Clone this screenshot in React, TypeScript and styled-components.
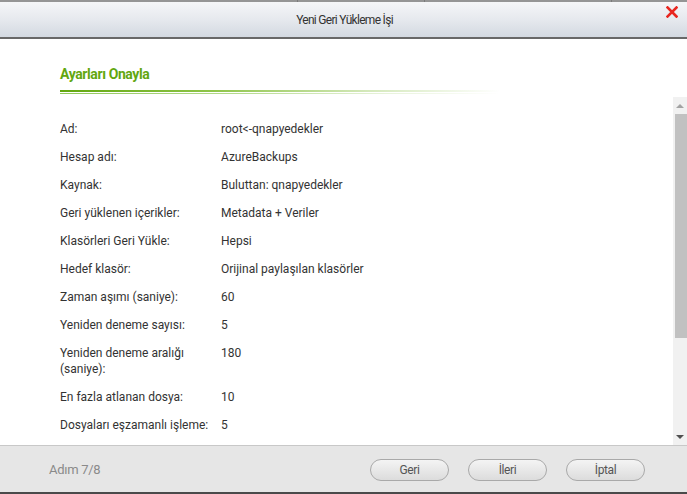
import React from 'react';
import styled, { createGlobalStyle } from 'styled-components';

const GlobalStyle = createGlobalStyle`
  html, body {
    margin: 0;
    padding: 0;
    background: #ffffff;
  }
  body {
    font-family: Roboto, "Liberation Sans", Arial, sans-serif;
    font-size: 12px;
    color: #333333;
  }
`;

const Dialog = styled.div`
  width: 687px;
  height: 494px;
  display: flex;
  flex-direction: column;
  overflow: hidden;
`;

const Backdrop = styled.div`
  height: 2px;
  display: flex;
  background: #959595;
`;

const BackdropCell = styled.div<{ $w: number }>`
  width: ${p => p.$w}px;
  border-right: 1px solid #7a7a7a;
`;

const TitleBar = styled.div`
  height: 35px;
  flex-shrink: 0;
  display: flex;
  align-items: center;
  justify-content: center;
  position: relative;
  background: linear-gradient(to bottom, #f5f6f8 0%, #e6e9ee 50%, #d3d9e1 100%);
  border-bottom: 2px solid #686868;
`;

const Title = styled.span`
  font-size: 12px;
  letter-spacing: -0.7px;
  color: #333333;
  padding-left: 2px;
`;

const CloseButton = styled.button`
  position: absolute;
  right: 9px;
  top: 4px;
  width: 12px;
  height: 12px;
  padding: 0;
  border: none;
  background: none;
  cursor: pointer;
  display: flex;
`;

const Body = styled.div`
  flex: 1;
  display: flex;
  flex-direction: column;
  background: #ffffff;
  min-height: 0;
`;

const HeadingBlock = styled.div`
  padding: 27px 0 0 60px;
`;

const Heading = styled.h2`
  margin: 0;
  font-size: 14px;
  line-height: 16px;
  font-weight: 700;
  letter-spacing: -0.4px;
  color: #62a70f;
`;

const Underline = styled.div`
  margin-top: 8px;
  width: 440px;
  height: 2px;
  background: linear-gradient(to right, #62a70f 0%, #8fc54a 35%, rgba(170, 210, 120, 0.5) 70%, rgba(255, 255, 255, 0) 100%);
`;

const UnderlineThin = styled.div`
  margin-top: 1px;
  width: 440px;
  height: 1px;
  background: linear-gradient(to right, #92c85a 0%, #b5da8c 40%, rgba(210, 232, 185, 0.5) 75%, rgba(255, 255, 255, 0) 100%);
`;

const ScrollArea = styled.div`
  margin-top: 3px;
  flex: 1;
  display: flex;
  min-height: 0;
`;

const ScrollContent = styled.div`
  flex: 1;
  overflow: hidden;
  padding: 18px 0 0 60px;
`;

const InfoGrid = styled.div`
  display: grid;
  grid-template-columns: 161px 1fr;
`;

const Label = styled.div`
  padding: 6px 8px 6px 0;
  line-height: 16px;
  color: #333333;
`;

const Value = styled.div`
  padding: 6px 0;
  line-height: 16px;
  color: #333333;
`;

const ScrollTrack = styled.div`
  width: 14px;
  background: #f1f1f1;
  display: flex;
  flex-direction: column;
  align-items: flex-end;
`;

const ArrowBox = styled.div`
  width: 14px;
  height: 17px;
  display: flex;
  align-items: center;
  justify-content: center;
`;

const Arrow = styled.div<{ $down?: boolean }>`
  width: 0;
  height: 0;
  border-left: 4px solid transparent;
  border-right: 4px solid transparent;
  ${p => p.$down ? 'border-top: 4px solid #505050;' : 'border-bottom: 4px solid #a3a3a3;'}
`;

const Thumb = styled.div`
  width: 12px;
  height: 224px;
  background: #c1c1c1;
`;

const TrackSpacer = styled.div`
  flex: 1;
`;

const Footer = styled.div`
  height: 46px;
  flex-shrink: 0;
  display: flex;
  align-items: center;
  background: #e6e6e6;
  border-top: 1px solid #c8c8c8;
  border-bottom: 2px solid #4a4a4a;
  padding: 0 42px 0 49px;
`;

const StepText = styled.span`
  font-size: 13px;
  letter-spacing: -0.3px;
  color: #8a8a8a;
  flex: 1;
`;

const ButtonRow = styled.div`
  display: flex;
  gap: 19px;
  padding-top: 2px;
`;

const PillButton = styled.button`
  width: 79px;
  height: 22px;
  border-radius: 11px;
  border: 1px solid #a9a9a9;
  background: linear-gradient(to bottom, #f4f4f4 0%, #e8e8e8 50%, #dcdcdc 100%);
  font-family: Roboto, "Liberation Sans", Arial, sans-serif;
  font-size: 12px;
  letter-spacing: -0.4px;
  color: #555555;
  padding: 0;
  cursor: pointer;
`;

const rows: { label: string; value: string }[] = [
  { label: 'Ad:', value: 'root<-qnapyedekler' },
  { label: 'Hesap adı:', value: 'AzureBackups' },
  { label: 'Kaynak:', value: 'Buluttan: qnapyedekler' },
  { label: 'Geri yüklenen içerikler:', value: 'Metadata + Veriler' },
  { label: 'Klasörleri Geri Yükle:', value: 'Hepsi' },
  { label: 'Hedef klasör:', value: 'Orijinal paylaşılan klasörler' },
  { label: 'Zaman aşımı (saniye):', value: '60' },
  { label: 'Yeniden deneme sayısı:', value: '5' },
  { label: 'Yeniden deneme aralığı (saniye):', value: '180' },
  { label: 'En fazla atlanan dosya:', value: '10' },
  { label: 'Dosyaları eşzamanlı işleme:', value: '5' },
];

export default function App() {
  return (
    <>
      <GlobalStyle />
      <Dialog>
        <Backdrop>
          <BackdropCell $w={297} />
          <BackdropCell $w={126} />
          <BackdropCell $w={186} />
        </Backdrop>
        <TitleBar>
          <Title>Yeni Geri Yükleme İşi</Title>
          <CloseButton title="Kapat">
            <svg width="12" height="12" viewBox="0 0 12 12">
              <path d="M1.5 1.5 L10.5 10.5 M10.5 1.5 L1.5 10.5" stroke="#e8261f" strokeWidth="2.6" strokeLinecap="square" />
            </svg>
          </CloseButton>
        </TitleBar>
        <Body>
          <HeadingBlock>
            <Heading>Ayarları Onayla</Heading>
            <Underline />
            <UnderlineThin />
          </HeadingBlock>
          <ScrollArea>
            <ScrollContent>
              <InfoGrid>
                {rows.map(r => (
                  <React.Fragment key={r.label}>
                    <Label>{r.label}</Label>
                    <Value>{r.value}</Value>
                  </React.Fragment>
                ))}
              </InfoGrid>
            </ScrollContent>
            <ScrollTrack>
              <ArrowBox><Arrow /></ArrowBox>
              <Thumb />
              <TrackSpacer />
              <ArrowBox><Arrow $down /></ArrowBox>
            </ScrollTrack>
          </ScrollArea>
        </Body>
        <Footer>
          <StepText>Adım 7/8</StepText>
          <ButtonRow>
            <PillButton>Geri</PillButton>
            <PillButton>İleri</PillButton>
            <PillButton>İptal</PillButton>
          </ButtonRow>
        </Footer>
      </Dialog>
    </>
  );
}
